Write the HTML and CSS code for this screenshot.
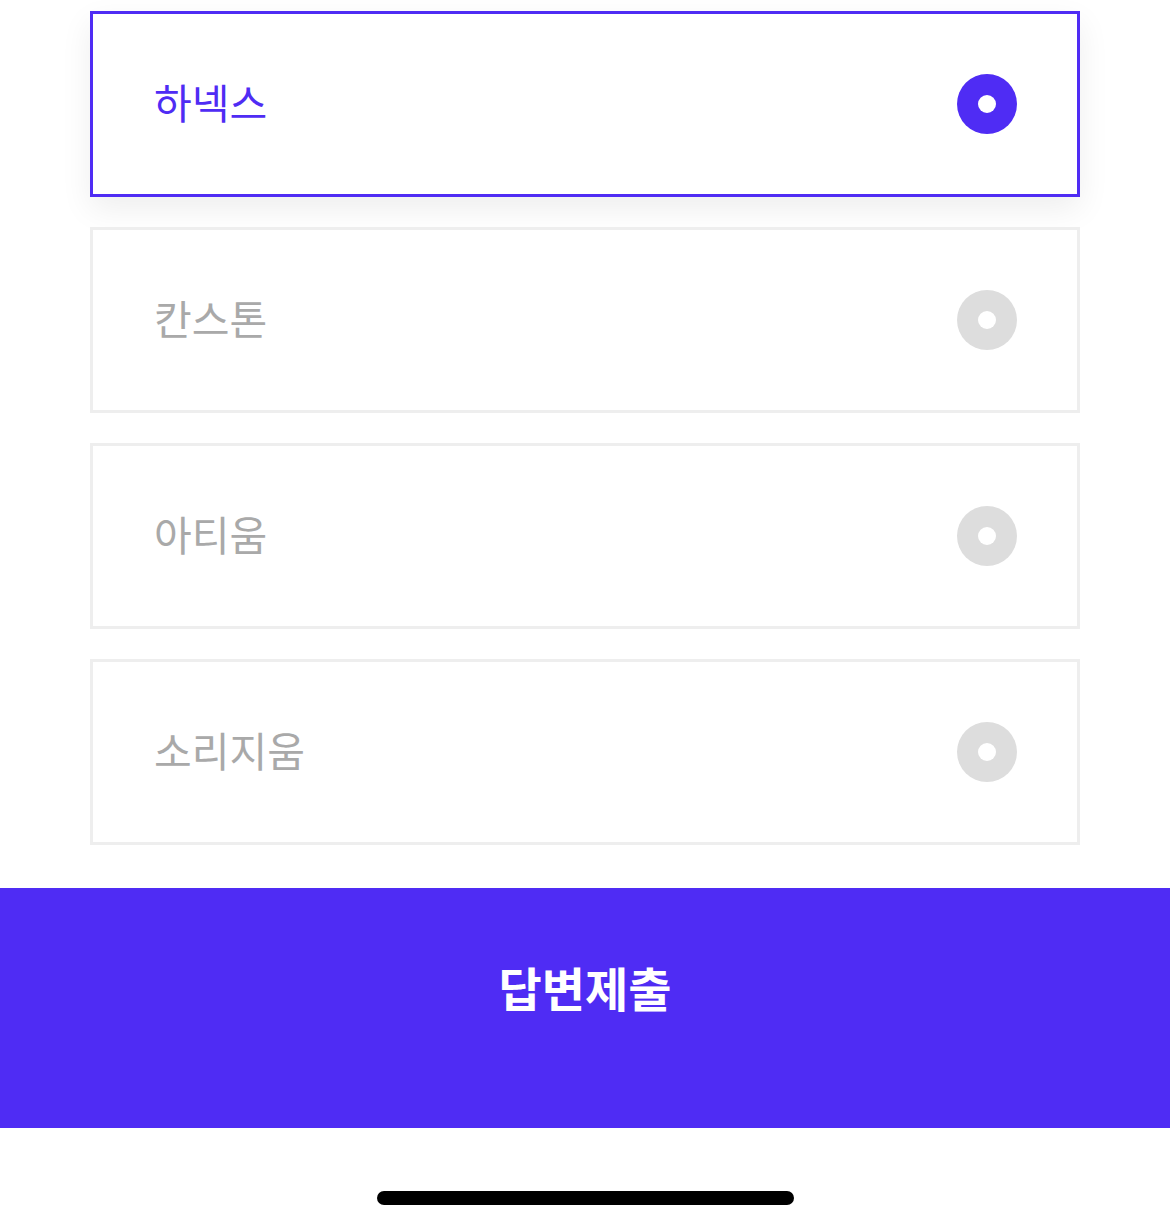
FILE: index.html
```html
<!DOCTYPE html>
<html lang="ko">
<head>
    <meta charset="UTF-8">
    <meta name="viewport" content="width=device-width, initial-scale=1.0">
    <title>답변 선택</title>
    <link rel="stylesheet" href="styles.css">
</head>
<body>
    <div class="page">
        <ul class="options">
            <li class="option selected">
                <span class="option-label">하넥스</span>
                <span class="radio"></span>
            </li>
            <li class="option">
                <span class="option-label">칸스톤</span>
                <span class="radio"></span>
            </li>
            <li class="option">
                <span class="option-label">아티움</span>
                <span class="radio"></span>
            </li>
            <li class="option">
                <span class="option-label">소리지움</span>
                <span class="radio"></span>
            </li>
        </ul>

        <button type="button" class="submit">답변제출</button>

        <div class="home-bar">
            <span class="home-indicator"></span>
        </div>
    </div>
</body>
</html>
```

FILE: styles.css
```css
body {
    margin: 0;
    background-color: #fff;
    font-family: "Noto Sans CJK KR", "Noto Sans", sans-serif;
}
.page {
    width: 1170px;
    padding-top: 11px;
}
.options {
    list-style: none;
    margin: 0 90px;
    padding: 0;
    display: flex;
    flex-direction: column;
    gap: 30px;
}
.option {
    height: 180px;
    display: flex;
    align-items: center;
    justify-content: space-between;
    padding: 0 60px 0 61px;
    border: 3px solid #eeeeee;
    background: #fff;
}
.option-label {
    font-size: 41px;
    color: #a9a9a9;
    line-height: 1;
    margin-bottom: 5px;
}
.radio {
    width: 60px;
    height: 60px;
    border-radius: 50%;
    background: #dddddd;
    display: flex;
    align-items: center;
    justify-content: center;
}
.radio::after {
    content: "";
    width: 18px;
    height: 18px;
    border-radius: 50%;
    background: #fff;
}
.option.selected {
    border-color: #4f2cf4;
    box-shadow: 0 12px 30px rgba(0, 0, 0, 0.07);
}
.option.selected .option-label {
    color: #4f2cf4;
}
.option.selected .radio {
    background: #4f2cf4;
}
.submit {
    display: block;
    width: 100%;
    height: 240px;
    margin-top: 43px;
    padding: 0 0 44px;
    border: none;
    background-color: #4f2cf4;
    color: #fff;
    font-family: "Noto Sans CJK KR", "Noto Sans", sans-serif;
    font-size: 47px;
    font-weight: 700;
    cursor: pointer;
}
.home-bar {
    height: 89px;
    display: flex;
    justify-content: center;
    align-items: flex-end;
}
.home-indicator {
    width: 417px;
    height: 14px;
    margin-bottom: 12px;
    border-radius: 7px;
    background: #000;
}
```
